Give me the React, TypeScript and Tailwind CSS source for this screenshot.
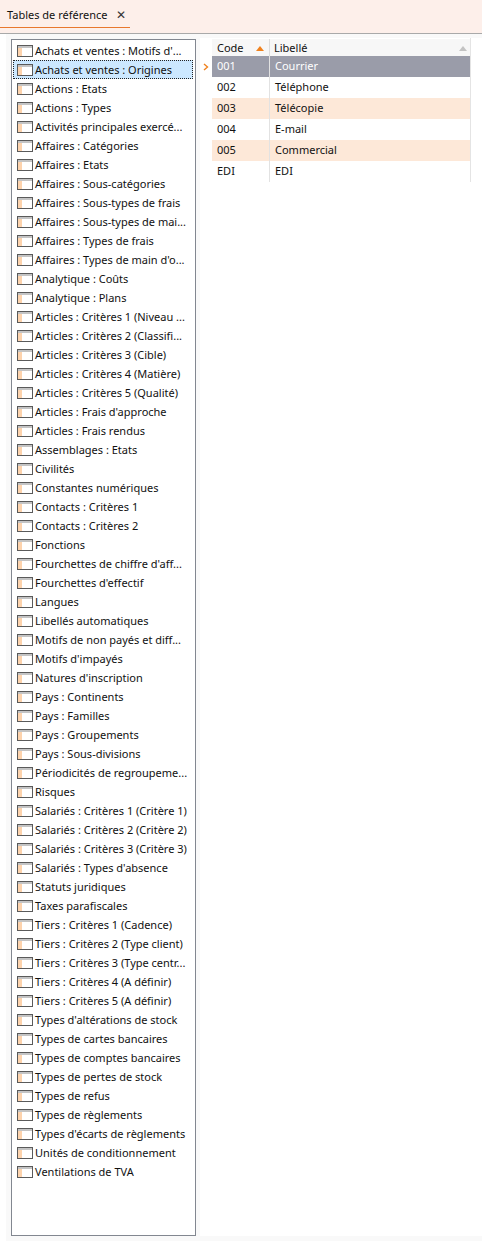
import React from "react";

const items = [
  "Achats et ventes : Motifs d'...",
  "Achats et ventes : Origines",
  "Actions : Etats",
  "Actions : Types",
  "Activités principales exercé...",
  "Affaires : Catégories",
  "Affaires : Etats",
  "Affaires : Sous-catégories",
  "Affaires : Sous-types de frais",
  "Affaires : Sous-types de mai...",
  "Affaires : Types de frais",
  "Affaires : Types de main d'o...",
  "Analytique : Coûts",
  "Analytique : Plans",
  "Articles : Critères 1 (Niveau ...",
  "Articles : Critères 2 (Classifi...",
  "Articles : Critères 3 (Cible)",
  "Articles : Critères 4 (Matière)",
  "Articles : Critères 5 (Qualité)",
  "Articles : Frais d'approche",
  "Articles : Frais rendus",
  "Assemblages : Etats",
  "Civilités",
  "Constantes numériques",
  "Contacts : Critères 1",
  "Contacts : Critères 2",
  "Fonctions",
  "Fourchettes de chiffre d'aff...",
  "Fourchettes d'effectif",
  "Langues",
  "Libellés automatiques",
  "Motifs de non payés et diff...",
  "Motifs d'impayés",
  "Natures d'inscription",
  "Pays : Continents",
  "Pays : Familles",
  "Pays : Groupements",
  "Pays : Sous-divisions",
  "Périodicités de regroupeme...",
  "Risques",
  "Salariés : Critères 1 (Critère 1)",
  "Salariés : Critères 2 (Critère 2)",
  "Salariés : Critères 3 (Critère 3)",
  "Salariés : Types d'absence",
  "Statuts juridiques",
  "Taxes parafiscales",
  "Tiers : Critères 1 (Cadence)",
  "Tiers : Critères 2 (Type client)",
  "Tiers : Critères 3 (Type centr...",
  "Tiers : Critères 4 (A définir)",
  "Tiers : Critères 5 (A définir)",
  "Types d'altérations de stock",
  "Types de cartes bancaires",
  "Types de comptes bancaires",
  "Types de pertes de stock",
  "Types de refus",
  "Types de règlements",
  "Types d'écarts de règlements",
  "Unités de conditionnement",
  "Ventilations de TVA",
];

const rows = [
  { code: "001", label: "Courrier" },
  { code: "002", label: "Téléphone" },
  { code: "003", label: "Télécopie" },
  { code: "004", label: "E-mail" },
  { code: "005", label: "Commercial" },
  { code: "EDI", label: "EDI" },
];

function TableIcon() {
  return (
    <svg width="16" height="12" viewBox="0 0 16 12" className="shrink-0">
      <rect x="0.5" y="0.5" width="15" height="11" fill="#ffffff" stroke="#5a5a5a" />
      <rect x="1" y="1" width="14" height="2" fill="#c4c4c4" />
      <rect x="1" y="3" width="4" height="8" fill="#fdd3ad" />
    </svg>
  );
}

export default function App() {
  return (
    <div
      className="w-[482px] h-[1241px] bg-white flex flex-col text-[11px] text-[#111]"
      style={{ fontFamily: '"Noto Sans", "Open Sans", sans-serif' }}
    >
      {/* Top tab bar */}
      <div className="h-[34px] shrink-0 bg-[#fdefea] border-b border-[#a9a9a9] flex items-start">
        <div className="h-[28px] w-[130px] border-b border-[#e8782e] flex items-center pl-[7px] gap-[8px] pt-[3px] whitespace-nowrap">
          <span>Tables de référence</span>
          <span className="text-[12px] leading-none text-[#333]">✕</span>
        </div>
      </div>

      {/* Content */}
      <div className="flex-1 ml-[6px] bg-[#f9f9f9] pt-[4px] pb-[5px] flex min-h-0">
        {/* Left list panel */}
        <div className="w-[194px] shrink-0 pl-[5px] pr-[4px] pt-[1px] flex">
          <div className="flex-1 min-w-0 overflow-hidden bg-white border border-[#828790] p-[1px] pr-[2px]">
            {items.map((it, i) => (
              <div
                key={i}
                className={
                  "h-[19px] flex items-center gap-[2px] pl-[3px] whitespace-nowrap overflow-hidden border " +
                  (i === 1
                    ? "bg-[#cce8ff] border-dotted border-[#222]"
                    : "border-transparent")
                }
              >
                <TableIcon />
                <span className="leading-none">{it}</span>
              </div>
            ))}
          </div>
        </div>

        {/* Right grid panel */}
        <div className="flex-1 bg-white flex flex-col">
          <div className="flex">
            {/* indicator column */}
            <div className="w-[12px] shrink-0 flex flex-col">
              <div className="h-[18px]" />
              <div className="h-[21px] flex items-center justify-center">
                <svg width="6" height="8" viewBox="0 0 6 8">
                  <path d="M1 1 L4.5 4 L1 7" fill="none" stroke="#f0821e" strokeWidth="1.4" />
                </svg>
              </div>
              {rows.slice(1).map((_, i) => (
                <div key={i} className="h-[21px]" />
              ))}
            </div>
            <div className="w-[259px] shrink-0 border-r border-[#e4e4e4] flex flex-col">
              {/* header */}
              <div className="h-[18px] mt-[1px] -mb-[1px] bg-[#f7f7f7] flex">
                <div className="w-[58px] border-r border-[#dcdcdc] flex items-center pl-[5px] pr-[5px] justify-between">
                  <span>Code</span>
                  <svg width="8" height="5" viewBox="0 0 8 5">
                    <path d="M0 5 L4 0 L8 5 Z" fill="#f0821e" />
                  </svg>
                </div>
                <div className="flex-1 flex items-center pl-[4px] pr-[3px] justify-between">
                  <span>Libellé</span>
                  <svg width="8" height="5" viewBox="0 0 8 5">
                    <path d="M0 5 L4 0 L8 5 Z" fill="#c3c3c3" />
                  </svg>
                </div>
              </div>
              {rows.map((r, i) => {
                const bg =
                  i === 0
                    ? "bg-[#9a9ca9] text-white"
                    : i % 2 === 0
                    ? "bg-[#fde8d8]"
                    : "bg-white";
                return (
                  <div key={r.code} className={"h-[21px] flex " + bg}>
                    <div className="w-[58px] border-r border-[#e2e2e2] flex items-center pl-[5px]">
                      {r.code}
                    </div>
                    <div className="flex-1 flex items-center pl-[5px]">{r.label}</div>
                  </div>
                );
              })}
            </div>
          </div>
        </div>
      </div>
    </div>
  );
}
